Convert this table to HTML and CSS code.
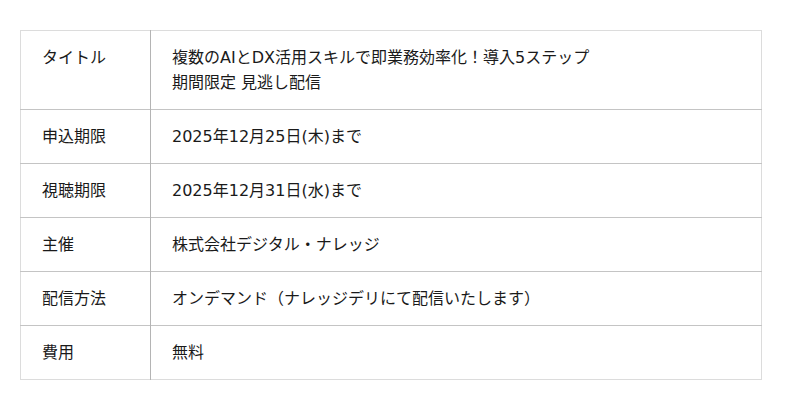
FILE: index.html
```html
<!DOCTYPE html>
<html lang="ja">
<head>
<meta charset="utf-8">
<link rel="stylesheet" href="styles.css">
</head>
<body>
<div class="wrap">
<table class="info">
<tr><th>タイトル</th><td>複数のAIとDX活用スキルで即業務効率化！導入5ステップ<br>期間限定 見逃し配信</td></tr>
<tr><th>申込期限</th><td>2025年12月25日(木)まで</td></tr>
<tr><th>視聴期限</th><td>2025年12月31日(水)まで</td></tr>
<tr><th>主催</th><td>株式会社デジタル・ナレッジ</td></tr>
<tr><th>配信方法</th><td>オンデマンド（ナレッジデリにて配信いたします）</td></tr>
<tr><th>費用</th><td>無料</td></tr>
</table>
</div>
</body>
</html>
```
FILE: styles.css
```css
html, body { margin: 0; padding: 0; background: #fff; }
.wrap { padding: 30px 38px 0 20px; }
.info {
  width: 742px;
  border-collapse: collapse;
  font-family: "DejaVu Sans", "Noto Sans CJK JP", sans-serif;
  font-size: 16px;
  line-height: 25px;
  color: #1a1a1a;
  border: 1px solid #dcdcdc;
}
.info th, .info td {
  text-align: left;
  font-weight: normal;
  vertical-align: top;
  padding: 14px 21px 14px 21px;
  border-top: 1px solid #c4c4c4;
}
.info tr:first-child th, .info tr:first-child td { border-top: 1px solid #dcdcdc; }
.info th { width: 87px; border-right: 1px solid #b4b4b4; }
```
